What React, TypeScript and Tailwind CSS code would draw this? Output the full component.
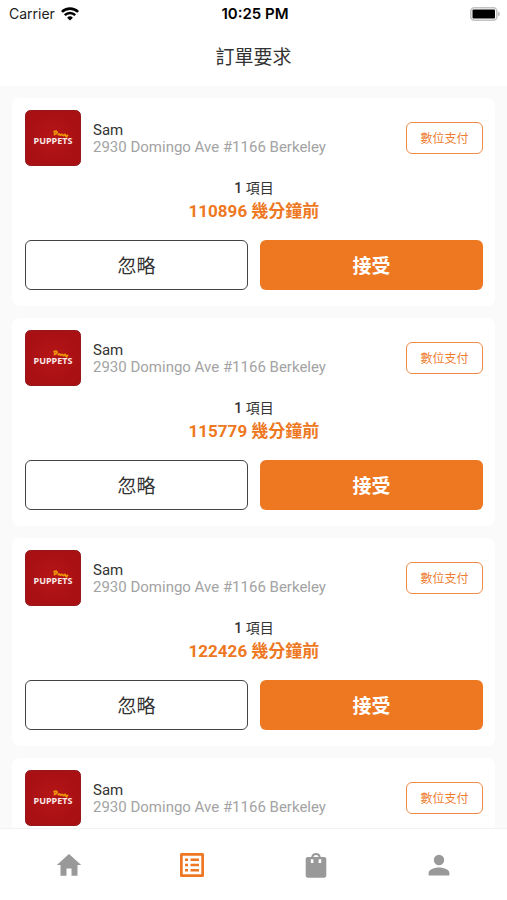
import React from "react";

const orders = [
  { id: 1, minutes: 110896 },
  { id: 2, minutes: 115779 },
  { id: 3, minutes: 122426 },
  { id: 4, minutes: 124310 },
];

function WifiIcon() {
  return (
    <svg viewBox="0 0 18 14" className="h-[14px] w-[18px]" aria-hidden="true">
      <g fill="none" stroke="#000" strokeWidth="2.6">
        <path d="M0.9 4.9a11.6 11.6 0 0 1 16.2 0" />
        <path d="M3.8 8.2a7.4 7.4 0 0 1 10.4 0" />
      </g>
      <path d="M9 13.6l-2.9-2.9a4.2 4.2 0 0 1 5.8 0z" fill="#000" />
    </svg>
  );
}

function BatteryIcon() {
  return (
    <svg viewBox="0 0 31 14" className="h-[14px] w-[31px]" aria-hidden="true">
      <rect x="0.8" y="0.8" width="26" height="12.4" rx="3.5" fill="#fff" stroke="#c2c2c2" strokeWidth="1.6" />
      <rect x="2.5" y="2.5" width="22.5" height="9" rx="1" fill="#000" />
      <path d="M28.2 4.6a2.6 2.6 0 0 1 0 4.8z" fill="#b4b4b4" />
    </svg>
  );
}

function ShopLogo() {
  return (
    <svg viewBox="0 0 56 56" className="h-14 w-14 shrink-0" role="img" aria-label="Puppets">
      <defs>
        <radialGradient id="logo-red">
          <stop offset="0" stopColor="#b61517" />
          <stop offset="1" stopColor="#a81013" />
        </radialGradient>
      </defs>
      <rect x="0.5" y="0.5" width="55" height="55" rx="5" fill="url(#logo-red)" stroke="#96181a" />
      <path
        d="M28.5 22.2q2.5-1.8 3.6 0-0.6 1.8-2.4 1.5l-0.2 1.600M33 25.2q0.6-2 1.6-0.8t1.6 0.4 1.6 0.3 1.7-0.2 1.3 0.9 1.7-0.4l-1 1.6"
        fill="none"
        stroke="#ec920a"
        strokeWidth="1.9"
        strokeLinejoin="round"
      />
      <text
        x="28"
        y="33.5"
        textAnchor="middle"
        fill="#fae8e8"
        fontSize="9"
        fontWeight="700"
        fontFamily="'Noto Sans', sans-serif"
      >
        PUPPETS
      </text>
    </svg>
  );
}

function OrderCard({ minutes }: { minutes: number }) {
  return (
    <article className="rounded-lg bg-white pt-3 pr-3 pb-4 pl-[13px]">
      <div className="flex items-center">
        <ShopLogo />
        <div className="ml-3 min-w-0 flex-1 pt-0.5 text-[15px] leading-[17px]">
          <h2 className="text-[#333]">Sam</h2>
          <p className="truncate text-[#a3a3a3]">2930 Domingo Ave #1166 Berkeley</p>
        </div>
        <span className="flex h-8 w-[77px] items-center justify-center rounded-md border border-[#f08a45] pt-0.5 text-xs text-[#ee7d2f]">
          數位支付
        </span>
      </div>
      <div className="mt-3 text-center">
        <p className="text-sm text-[#333]">
          <span className="font-medium">1</span> 項目
        </p>
        <p className="text-[17px] leading-[26px] font-bold text-[#ee7822]">{minutes} 幾分鐘前</p>
      </div>
      <div className="mt-4 grid grid-cols-2 gap-3 text-[19px]">
        <button type="button" className="h-[50px] rounded-md border border-[#444] bg-white pt-1 text-[#333]">
          忽略
        </button>
        <button type="button" className="h-[50px] rounded-md bg-[#ee7822] pt-1 font-bold text-white">
          接受
        </button>
      </div>
    </article>
  );
}

function NavButton({ label, active, children }: { label: string; active?: boolean; children: React.ReactNode }) {
  return (
    <button
      type="button"
      aria-label={label}
      className={`flex h-full flex-1 items-center justify-center ${active ? "text-[#ee7822]" : "text-[#999]"}`}
    >
      <svg viewBox="0 0 28 28" className="h-7 w-7" fill="currentColor" aria-hidden="true">
        {children}
      </svg>
    </button>
  );
}

export default function App() {
  return (
    <div className="flex h-screen flex-col bg-[#fafafa] font-[Roboto,'Noto_Sans_CJK_TC',sans-serif]">
      <header className="bg-white">
        <div className="grid h-7 grid-cols-3 items-center pr-[6px] pl-[9px] font-[Inter,sans-serif] text-sm text-black">
          <div className="flex items-center gap-[6px] text-[#222]">
            Carrier <WifiIcon />
          </div>
          <div className="text-center text-[15px] font-semibold">10:25 PM</div>
          <div className="flex justify-end">
            <BatteryIcon />
          </div>
        </div>
        <h1 className="flex h-[58px] items-center justify-center pt-0.5 text-[19px] text-[#333]">訂單要求</h1>
      </header>
      <main className="flex min-h-0 flex-1 flex-col gap-3 overflow-y-auto p-3 [scrollbar-width:none]">
        {orders.map((o) => (
          <OrderCard key={o.id} minutes={o.minutes} />
        ))}
      </main>
      <nav className="flex h-[72px] shrink-0 border-t border-[#f3f3f3] bg-white pr-[6px] pl-[7px]">
        <NavButton label="首頁">
          <path d="M14 3L1.8 14h3.7v10.8h6v-7.3h5v7.3h6V14h3.7z" />
        </NavButton>
        <NavButton label="訂單" active>
          <path
            fillRule="evenodd"
            d="M3.5 2h21q1.5 0 1.5 1.5v21q0 1.5-1.5 1.5h-21q-1.5 0-1.5-1.5v-21Q2 2 3.5 2zM4.7 4.7v18.6h18.6V4.7z"
          />
          <path d="M7 7.500h3v2.600H7zM12.500 7.500H21v2.600h-8.500zM7 12.700h3v2.600H7zM12.500 12.700H21v2.600h-8.500zM7 17.900h3v2.600H7zM12.500 17.900H21v2.600h-8.500z" />
        </NavButton>
        <NavButton label="商品">
          <path
            fillRule="evenodd"
            d="M9.2 6a4.9 4.9 0 0 1 9.6 0h3.4q2.100 0 2.100 2.100v16.400q0 2.300-2.300 2.300H6q-2.300 0-2.300-2.300V8.100Q3.700 6 5.800 6zM11.300 6h5.400a2.800 2.800 0 0 0-5.400 0zM8.800 8.300v3.600h2.600V8.300zM16.600 8.300v3.600h2.600V8.300z"
          />
        </NavButton>
        <NavButton label="帳戶">
          <circle cx="14" cy="9" r="5.2" />
          <path d="M3.6 24.5v-2.600c0-3.500 7-5.300 10.400-5.300s10.400 1.800 10.400 5.300v2.600z" />
        </NavButton>
      </nav>
    </div>
  );
}
